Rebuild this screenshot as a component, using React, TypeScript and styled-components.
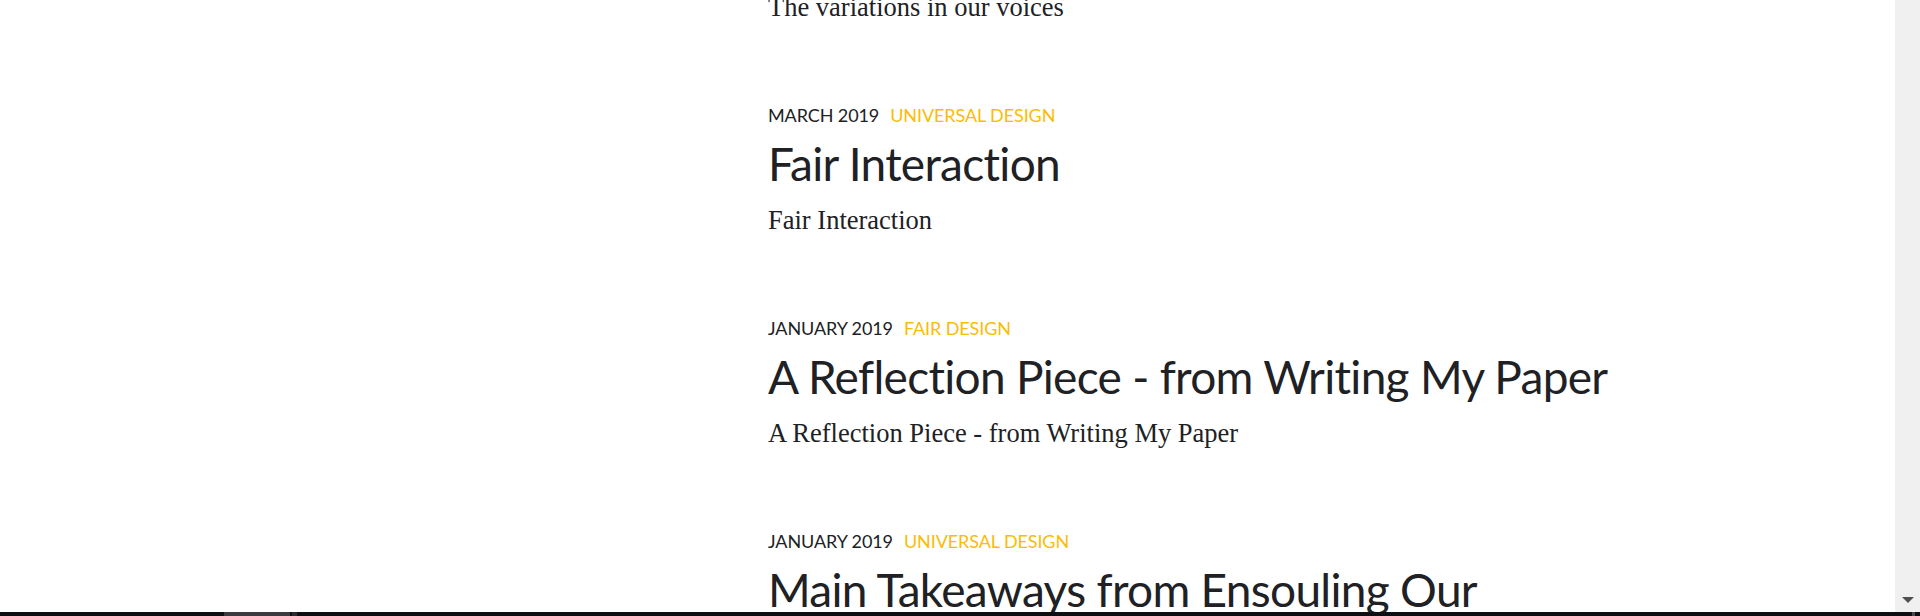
import React from "react";
import styled, { createGlobalStyle } from "styled-components";

const Global = createGlobalStyle`
  html, body { margin: 0; padding: 0; height: 616px; overflow: hidden; background: #ffffff; }
  #root { height: 616px; }
`;

const Screen = styled.div`
  display: grid;
  grid-template-columns: 1fr 25px;
  grid-template-rows: 612px 4px;
  width: 1920px;
  height: 616px;
`;

const Page = styled.main`
  display: flex;
  overflow: hidden;
  background: #ffffff;
`;

const Sidebar = styled.aside`
  flex: 0 0 768px;
`;

const Feed = styled.section`
  display: flex;
  flex-direction: column;
  margin-top: -110px;
  max-width: 880px;
`;

const Post = styled.article`
  display: flex;
  flex-direction: column;
  margin-bottom: 80px;
`;

const Meta = styled.div`
  display: flex;
  gap: 11px;
  height: 24px;
  line-height: 24px;
  font-family: "Lato", "Noto Sans", sans-serif;
  font-size: 18px;
  letter-spacing: -0.1px;
  text-transform: uppercase;
  color: #202124;
`;

const Category = styled.span`
  color: #fbbc04;
`;

const Title = styled.h2`
  margin: 9px 0 0;
  font-family: "Lato", "Noto Sans", sans-serif;
  font-weight: 400;
  font-size: 46px;
  line-height: 56px;
  letter-spacing: -0.7px;
  color: #202124;
`;

const Excerpt = styled.p`
  margin: 12px 0 0;
  font-family: "Liberation Serif", serif;
  font-size: 26.5px;
  line-height: 32px;
  color: #202124;
`;

const Scrollbar = styled.div`
  grid-row: 1;
  grid-column: 2;
  background: #f0f0f0;
  display: flex;
  flex-direction: column;
  justify-content: flex-end;
  align-items: center;
  padding-bottom: 9px;
  box-sizing: border-box;
`;

const ArrowDown = styled.div`
  width: 0;
  height: 0;
  border-left: 6px solid transparent;
  border-right: 6px solid transparent;
  border-top: 6px solid #505050;
`;

const Taskbar = styled.div`
  grid-row: 2;
  grid-column: 1 / span 2;
  background: #0d0f13;
  display: flex;
  align-items: stretch;
`;

const BarGap = styled.div<{ $w: number }>`
  flex: 0 0 ${(p) => p.$w}px;
`;

const BarSeg = styled.div<{ $w: number; $c: string }>`
  flex: 0 0 ${(p) => p.$w}px;
  background: ${(p) => p.$c};
`;

type PostData = { date: string; category: string; title: string; excerpt: string };

const posts: PostData[] = [
  {
    date: "April 2019",
    category: "Fair Design",
    title: "The variations in our voices",
    excerpt: "The variations in our voices",
  },
  {
    date: "March 2019",
    category: "Universal Design",
    title: "Fair Interaction",
    excerpt: "Fair Interaction",
  },
  {
    date: "January 2019",
    category: "Fair Design",
    title: "A Reflection Piece - from Writing My Paper",
    excerpt: "A Reflection Piece - from Writing My Paper",
  },
  {
    date: "January 2019",
    category: "Universal Design",
    title: "Main Takeaways from Ensouling Our Technologies",
    excerpt: "Main Takeaways from Ensouling Our Technologies",
  },
];

export default function App() {
  return (
    <>
      <Global />
      <Screen>
        <Page>
          <Sidebar />
          <Feed>
            {posts.map((p, i) => (
              <Post key={i}>
                <Meta>
                  <span>{p.date}</span>
                  <Category>{p.category}</Category>
                </Meta>
                <Title>{p.title}</Title>
                <Excerpt>{p.excerpt}</Excerpt>
              </Post>
            ))}
          </Feed>
        </Page>
        <Scrollbar>
          <ArrowDown />
        </Scrollbar>
        <Taskbar>
          <BarGap $w={224} />
          <BarSeg $w={66} $c="#3a3a3f" />
          <BarGap $w={2} />
          <BarSeg $w={5} $c="#2c2c30" />
          <BarGap $w={1615} />
          <BarSeg $w={3} $c="#4a4a4e" />
        </Taskbar>
      </Screen>
    </>
  );
}
